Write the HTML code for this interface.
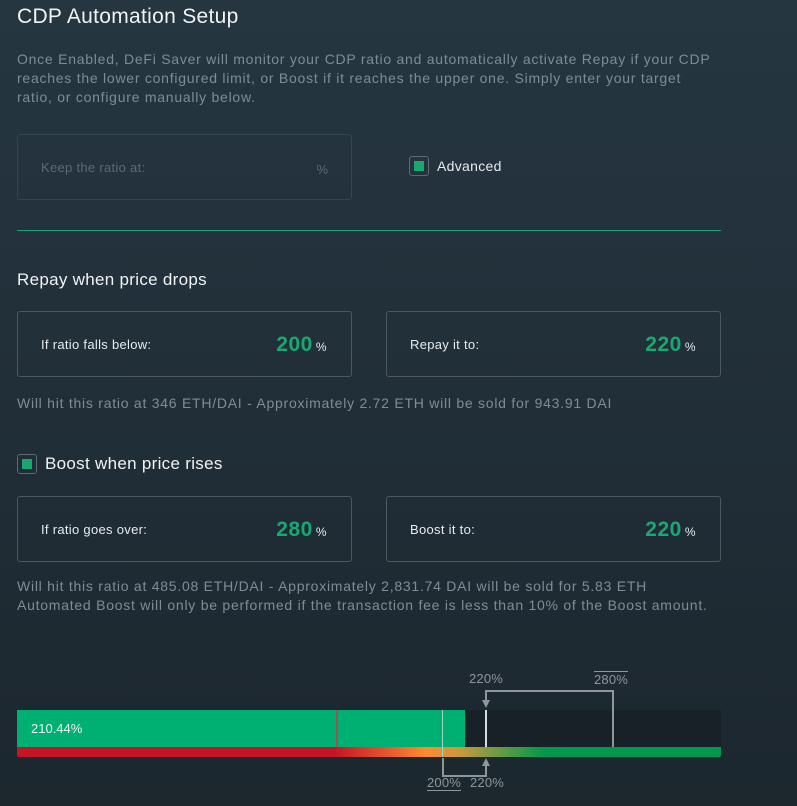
<!DOCTYPE html>
<html><head><style>
body{margin:0;width:797px;height:806px;overflow:hidden;background:linear-gradient(180deg,#253640 0%,#22303a 40%,#1c272e 100%);font-family:"Liberation Sans",sans-serif;position:relative;color:#fff}
.a{position:absolute;white-space:nowrap}
.box{position:absolute;border:1px solid #4a5861;border-radius:3px;box-sizing:border-box}
.lbl{position:absolute;left:23px;top:25px;font-size:13px;color:#e6ecef;letter-spacing:.3px}
.val{position:absolute;right:24px;top:21px;font-size:21px;font-weight:bold;color:#1aa870;letter-spacing:.5px}
.val span{font-size:12px;font-weight:normal;color:#e6ecef;margin-left:3px}
.p{font-size:14px;color:#7d8d97;line-height:19px;letter-spacing:.75px}
.cb{position:absolute;width:20px;height:20px;border:1px solid #5e6b73;border-radius:3px;box-sizing:border-box}
.cb:after{content:"";position:absolute;left:4px;top:4px;width:10px;height:10px;background:#1aa870}
.g{color:#8d979c;font-size:13px;letter-spacing:.2px}
</style></head><body>
<div class="a" style="left:17px;top:5px;font-size:21px;color:#f0f3f5;letter-spacing:.3px">CDP Automation Setup</div>
<div class="a p" style="left:17px;top:50px">Once Enabled, DeFi Saver will monitor your CDP ratio and automatically activate Repay if your CDP<br>reaches the lower configured limit, or Boost if it reaches the upper one. Simply enter your target<br>ratio, or configure manually below.</div>
<div class="box" style="left:17px;top:134px;width:335px;height:66px;border-color:#37454e"><div class="a" style="left:23px;top:25px;font-size:13px;color:#5b6a73;letter-spacing:.3px">Keep the ratio at:</div><div class="a" style="right:23px;top:27px;font-size:13px;color:#5b6a73">%</div></div>
<div class="cb" style="left:409px;top:156px"></div>
<div class="a" style="left:437px;top:158px;font-size:14px;color:#e6ecef;letter-spacing:.3px">Advanced</div>
<div class="a" style="left:17px;top:230px;width:704px;height:1px;background:#1aa870"></div>
<div class="a" style="left:17px;top:270px;font-size:17px;color:#f0f3f5;letter-spacing:.3px">Repay when price drops</div>
<div class="box" style="left:17px;top:311px;width:335px;height:66px"><div class="lbl">If ratio falls below:</div><div class="val">200<span>%</span></div></div>
<div class="box" style="left:386px;top:311px;width:335px;height:66px"><div class="lbl">Repay it to:</div><div class="val">220<span>%</span></div></div>
<div class="a p" style="left:17px;top:394px">Will hit this ratio at 346 ETH/DAI - Approximately 2.72 ETH will be sold for 943.91 DAI</div>
<div class="cb" style="left:17px;top:454px"></div>
<div class="a" style="left:45px;top:454px;font-size:17px;color:#f0f3f5;letter-spacing:.3px">Boost when price rises</div>
<div class="box" style="left:17px;top:496px;width:335px;height:66px"><div class="lbl">If ratio goes over:</div><div class="val">280<span>%</span></div></div>
<div class="box" style="left:386px;top:496px;width:335px;height:66px"><div class="lbl">Boost it to:</div><div class="val">220<span>%</span></div></div>
<div class="a p" style="left:17px;top:577px">Will hit this ratio at 485.08 ETH/DAI - Approximately 2,831.74 DAI will be sold for 5.83 ETH<br>Automated Boost will only be performed if the transaction fee is less than 10% of the Boost amount.</div>
<div class="a" style="left:17px;top:710px;width:704px;height:37px;background:#182128"></div>
<div class="a" style="left:17px;top:710px;width:448px;height:37px;background:#00b073"></div>
<div class="a" style="left:17px;top:747px;width:704px;height:10px;border-radius:0 0 2px 2px;background:linear-gradient(90deg,#c31525 0%,#c31525 45%,#e85a2e 53%,#ff8a2e 58%,#c79a3a 63%,#4f9a45 70%,#00984a 75%,#00984a 100%)"></div>
<div class="a" style="left:31px;top:721px;font-size:13px;color:#f0f3f5">210.44%</div>
<div class="a" style="left:336px;top:710px;width:2px;height:37px;background:#a0524d"></div>
<div class="a" style="left:442px;top:710px;width:1px;height:47px;background:#9fd8c0"></div>
<div class="a" style="left:485px;top:710px;width:2px;height:37px;background:#d8dde0"></div>
<div class="a" style="left:612px;top:710px;width:2px;height:37px;background:#8d979c"></div>
<svg class="a" style="left:0;top:0" width="797" height="806"><g stroke="#8d979c" stroke-width="2" fill="none"><path d="M486 705V691H613V710"/><path d="M443 758V776H486V762"/></g><g fill="#8d979c"><path d="M482 700h8l-4 8z"/><path d="M482 766h8l-4-8z"/></g></svg>
<div class="a g" style="left:469px;top:671px">220%</div>
<div class="a g" style="left:594px;top:671px;border-top:1px solid #8d979c">280%</div>
<div class="a g" style="left:427px;top:775px;border-bottom:1px solid #8d979c">200%</div>
<div class="a g" style="left:470px;top:775px">220%</div>
</body></html>
